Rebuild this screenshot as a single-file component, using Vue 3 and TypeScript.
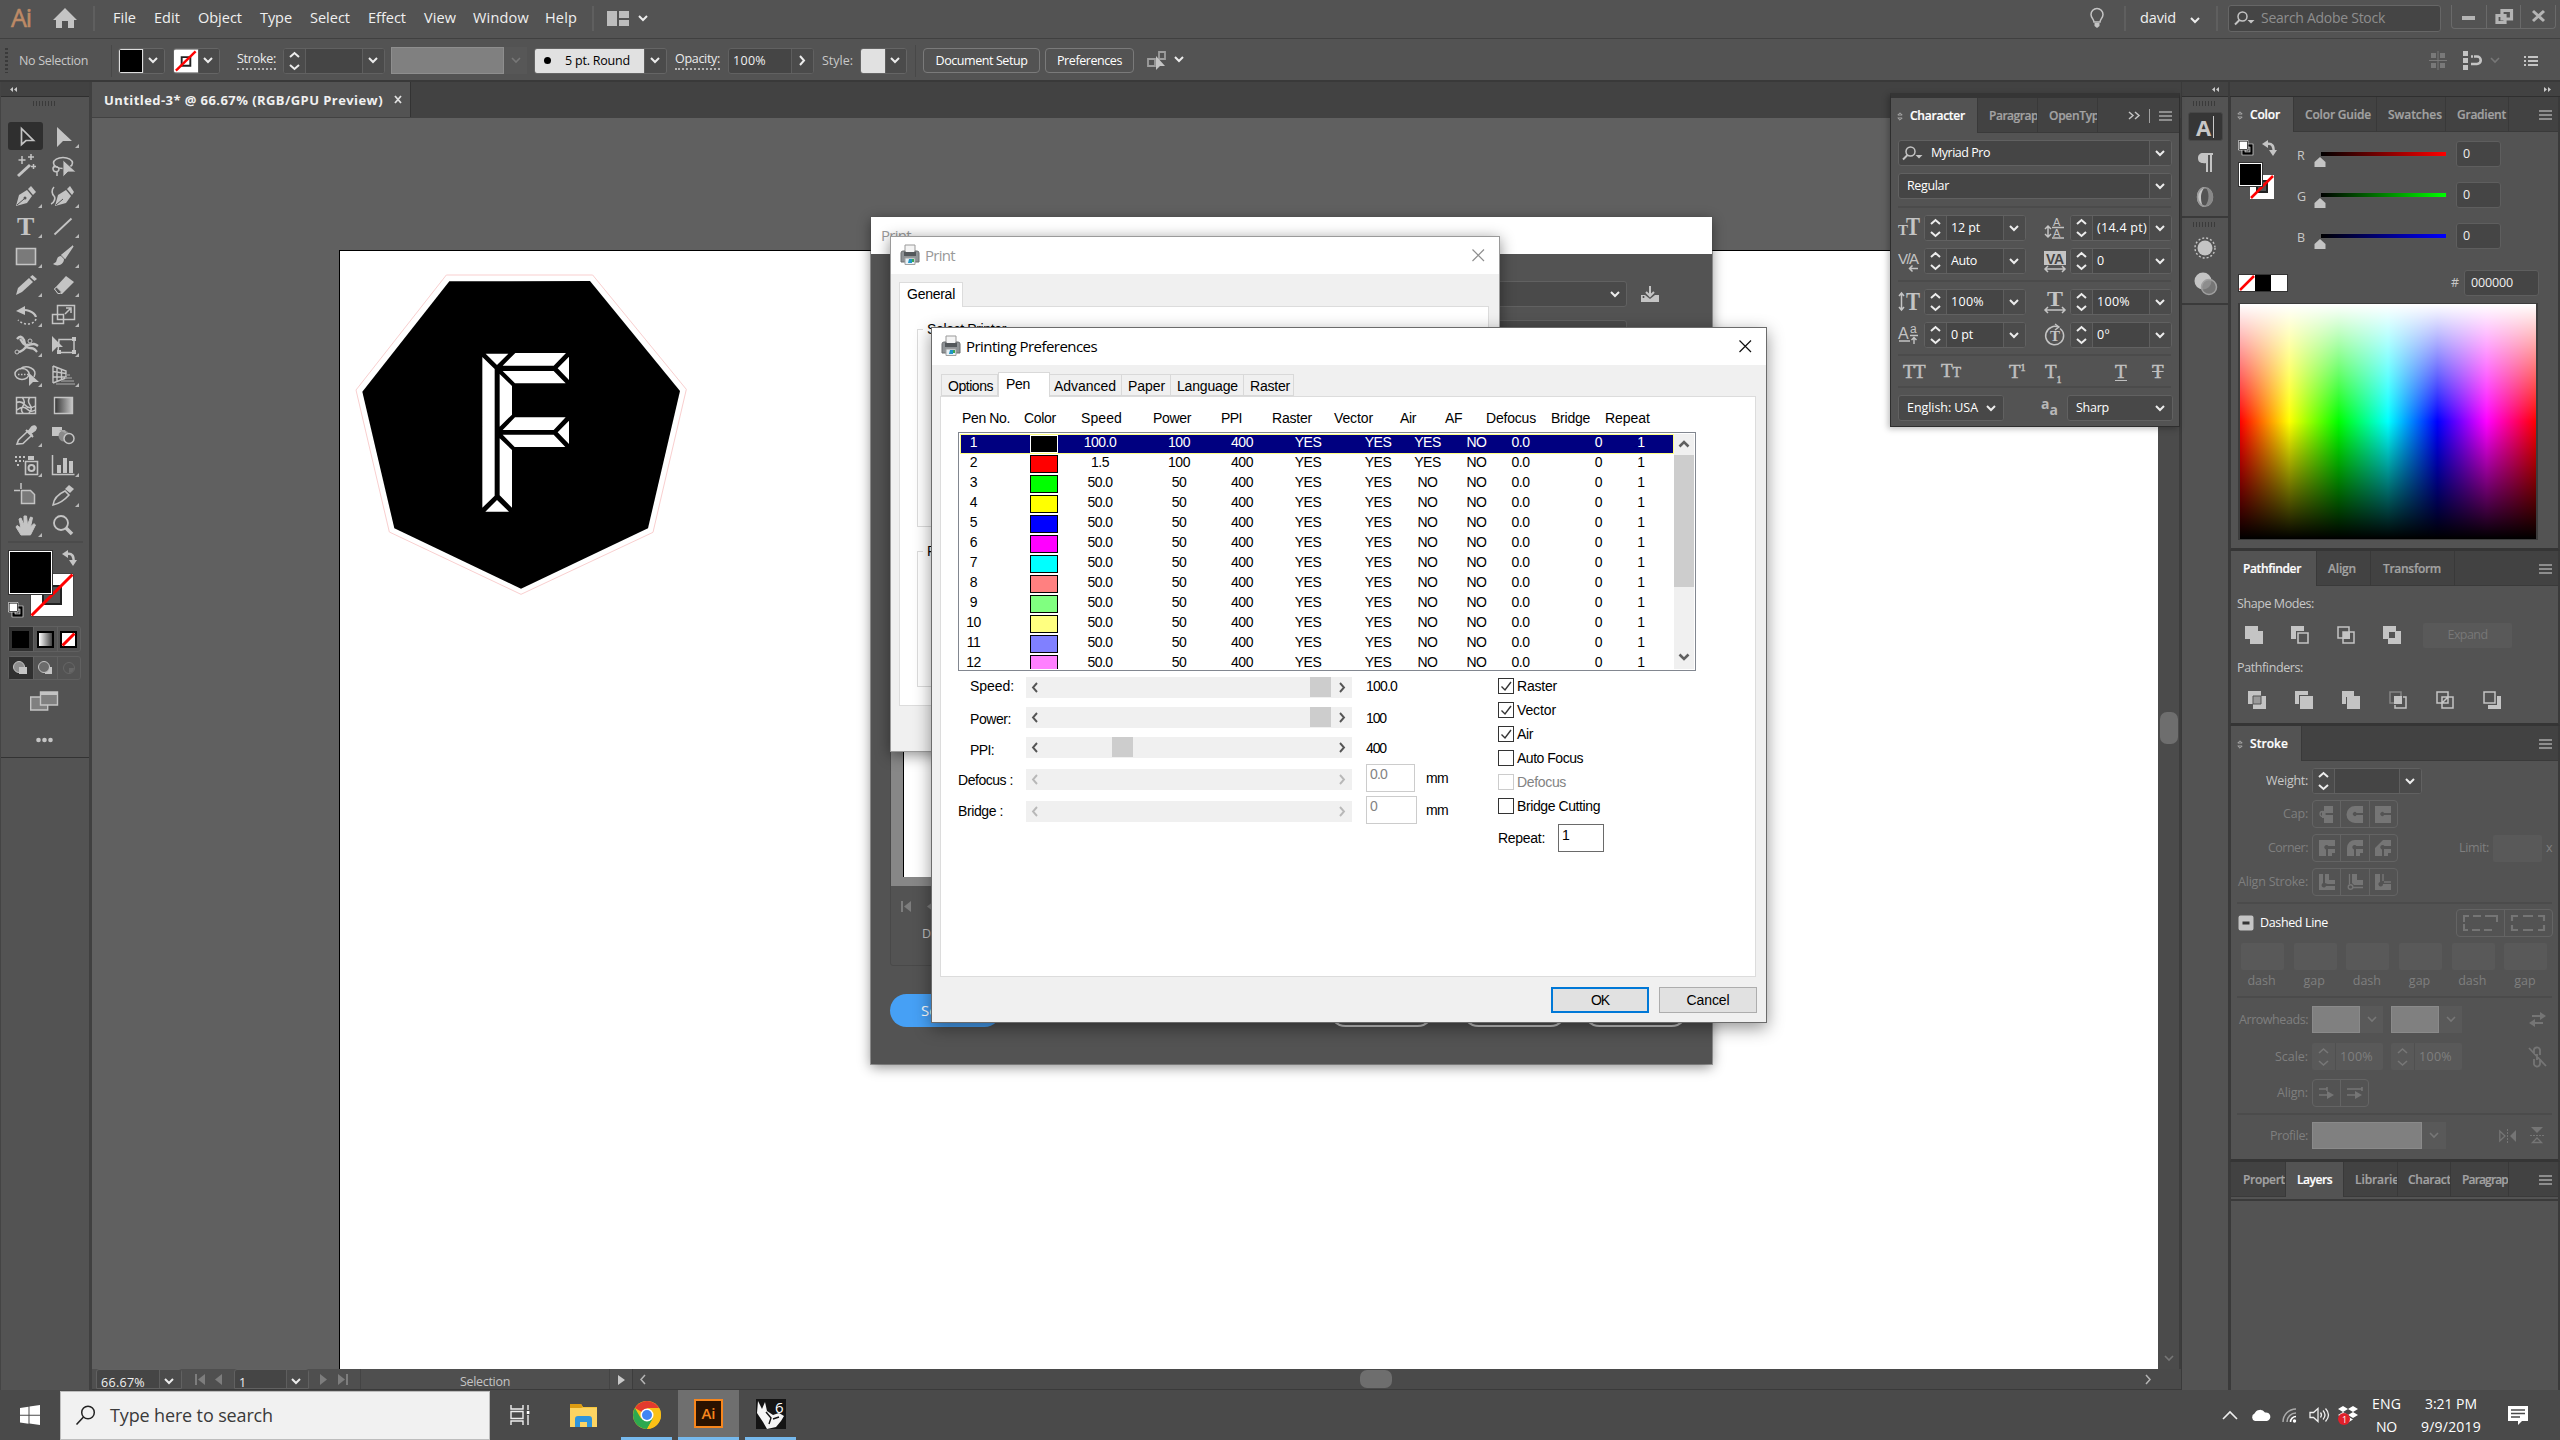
<script setup lang="ts">
import { h } from 'vue'

const G = '#c4c4c4'
const D = '#757575'

/* Tightens or loosens tracking so a label occupies the given width. */
const vFit = {
  mounted(el: HTMLElement, b: { value: number }) {
    const r = document.createRange()
    r.selectNodeContents(el)
    const natural = r.getBoundingClientRect().width
    const n = (el.textContent || ' ').length
    el.style.letterSpacing = ((b.value - natural) / n).toFixed(3) + 'px'
  },
}

const svgs: Record<string, string> = {
  home: `<path d="M12 0L0 12h3v8h6v-7h6v7h6v-8h3z" fill="${G}"/>`,
  layout: `<path d="M0 0h10v15H0zM12 0h10v7H12zM12 9h10v6H12z" fill="#bdbdbd"/>`,
  bulb: `<path d="M4 14C4 11 1 10 1 6.500a6 6 0 0 1 12 0C13 10 10 11 10 14z" fill="none" stroke="${G}" stroke-width="1.500"/><path d="M4.500 15h5v3l-2.500 2-2.500-2z" fill="${G}"/>`,
  mag: `<circle cx="8.500" cy="5.500" r="4.500" fill="none" stroke="${G}" stroke-width="1.500"/><path d="M5.500 9L1 13.500" stroke="${G}" stroke-width="2"/><path d="M13.500 9h7l-3.500 3.500z" fill="${G}"/>`,
  winmin: `<path d="M0 6h13v4H0z" fill="#b4b4b4"/>`,
  winres: `<path d="M7 1.500h9.500V10H7zM2 6.500h8v7H2z" fill="none" stroke="#b4b4b4" stroke-width="3.200"/>`,
  winx: `<path d="M1 1l11 10M12 1L1 11" stroke="#b4b4b4" stroke-width="3"/>`,
  grip4: `<path d="M2 2h5v5H2zM11 2h5v5h-5zM2 12h5v5H2zM11 12h5v5h-5z" fill="#797979"/><path d="M9 0v19M0 9.500h18" stroke="#797979"/>`,
  snap: `<path d="M0 0h5v5H0zM0 7h5v5H0zM0 14h5v5H0z" fill="${G}"/><path d="M8 5.500h6a3.300 3.300 0 0 1 0 7.500H8" fill="none" stroke="${G}" stroke-width="2.600" stroke-dasharray="2 1 30"/>`,
  list: `<path d="M0 0h2v2H0zM0 4h2v2H0zM0 8h2v2H0zM4 0h10v2H4zM4 4h10v2H4zM4 8h10v2H4z" fill="${G}"/>`,
  isolate: `<path d="M1 8h7v7H1zM12 1h6v7h-6z" fill="none" stroke="#9d9d9d" stroke-width="1.800"/><path d="M9 5v14l4-4h5z" fill="${G}"/>`,
  chev: `<path d="M1 1l4 4 4-4" fill="none" stroke="#ececec" stroke-width="2"/>`,
  chevd: `<path d="M1 1l4 4 4-4" fill="none" stroke="#777" stroke-width="1.600"/>`,
  chevr: `<path d="M1 1l4 4.500L1 10" fill="none" stroke="#ececec" stroke-width="2"/>`,
  spin: `<path d="M1 5l4.500-4L10 5M1 13l4.500 4 4.500-4" fill="none" stroke="#ececec" stroke-width="2"/>`,
  spind: `<path d="M1 5l4.500-4L10 5M1 13l4.500 4 4.500-4" fill="none" stroke="#777" stroke-width="1.600"/>`,
  noneSw: `<path d="M0 0h25v24H0z" fill="#fff"/><path d="M8 8h9v9H8z" fill="#fff" stroke="#222" stroke-width="2"/><path d="M2 22L22.500 2" stroke="#f00" stroke-width="2.500"/>`,
  menu: `<path d="M0 1h13M0 5h13M0 9h13" stroke="#a6a6a6" stroke-width="1.300"/>`,
  updn: `<path d="M.8 3L3 .8 5.200 3zM.8 6L3 8.200 5.200 6z" fill="none" stroke="#a8a8a8"/>`,
  dblL: `<path d="M4 0L1 2.500 4 5zM8 0L5 2.500 8 5z" fill="#c9c9c9"/>`,
  dblR: `<path d="M1 0l3 2.500L1 5zM5 0l3 2.500L5 5z" fill="#c9c9c9"/>`,
  more: `<path d="M1 1l4 3.500L1 8M7 1l4 3.500L7 8" fill="none" stroke="${G}" stroke-width="1.500"/>`,
  closex: `<path d="M1 1l6 7M7 1L1 8" stroke="#e0e0e0" stroke-width="1.800"/>`,
  swap: `<path d="M5 4c5-1 7 2 6.500 8" fill="none" stroke="${G}" stroke-width="2.500"/><path d="M6 0v8L0 4zM7 10h8l-4 6z" fill="${G}"/>`,
  deflt: `<path d="M5.500 5.500h8v8h-8z" fill="none" stroke="#fff" stroke-width="3.600"/><path d="M5.500 5.500h8v8h-8z" fill="none" stroke="#000" stroke-width="2.400"/><path d="M1 1h8.500v8.500H1z" fill="#fff" stroke="#000"/><path d="M.5.5h9.500v9.500H.5z" fill="none" stroke="#fff" stroke-width=".6"/>`,
  strokeSw: `<path d="M.5.5h43v43H.5z" fill="#fff" stroke="#444"/><path d="M13 13h18v18H13z" fill="#535353" stroke="#222" stroke-width="2"/><path d="M1.500 42.500l41-41" stroke="#f00" stroke-width="3"/>`,
  mBlack: `<path d="M0 0h17v17H0z" fill="#000"/>`,
  mGrad: `<defs><linearGradient id="mg"><stop stop-color="#fff"/><stop offset="1" stop-color="#444"/></linearGradient></defs><path d="M0 0h17v17H0z" fill="#000"/><path d="M2 2h13v13H2z" fill="url(#mg)"/>`,
  mNone: `<path d="M0 0h17v17H0z" fill="#000"/><path d="M2 2h13v13H2z" fill="#fff"/><path d="M2.500 14.500l12-12" stroke="#f00" stroke-width="3"/>`,
  dNorm: `<ellipse cx="6" cy="6" rx="5.500" ry="5.500" fill="#8d8d8d" stroke="${G}"/><path d="M6 6h8v7H6z" fill="${G}"/>`,
  dBehind: `<path d="M7 6h7v7H7z" fill="${G}"/><circle cx="6" cy="6" r="5.500" fill="#6b6b6b" stroke="${G}"/>`,
  dInside: `<circle cx="7" cy="7" r="5.500" fill="none" stroke="#666"/><path d="M7 7h5a5 5 0 0 1-5 5z" fill="#666"/>`,
  screen: `<path d="M.7 6h17v13H.7z" fill="#808080" stroke="${G}" stroke-width="1.400"/><path d="M10.500 1h17v13h-17z" fill="#808080" stroke="${G}" stroke-width="1.400"/><path d="M10 1h18v3H10z" fill="${G}"/>`,
  dots: `<circle cx="2.500" cy="3" r="2.300" fill="${G}"/><circle cx="8.500" cy="3" r="2.300" fill="${G}"/><circle cx="14.500" cy="3" r="2.300" fill="${G}"/>`,
  fsize: `<text x="0" y="18" font-family="Liberation Serif" font-weight="700" font-size="15" fill="${G}">T</text><text x="8" y="18" font-family="Liberation Serif" font-weight="700" font-size="25" textLength="14" lengthAdjust="spacingAndGlyphs" fill="${G}">T</text>`,
  leading: `<path d="M4 9v10M1 12l3-3 3 3M1 17l3 3 3-3" stroke="${G}" fill="none" stroke-width="1.500"/><text x="9" y="9" font-family="Liberation Sans" font-size="11" textLength="10" fill="${G}">A</text><text x="9" y="20" font-family="Liberation Sans" font-size="11" textLength="10" fill="${G}">A</text><path d="M8 10.500h12M8 21h12" stroke="${G}" stroke-width="1.300"/>`,
  kern: `<text x="0" y="14" font-family="Liberation Sans" font-size="15" textLength="21" fill="${G}">V/A</text><path d="M20 18.500h-8M14.500 15.500l-3 3 3 3" stroke="${G}" fill="none" stroke-width="1.500"/>`,
  track: `<path d="M0 1h22v14H0z" fill="${G}"/><text x="2" y="13.500" font-family="Liberation Sans" font-weight="700" font-size="14" textLength="18" fill="#444">VA</text><path d="M1 19h20M4 16l-3 3 3 3M18 16l3 3-3 3" stroke="${G}" fill="none" stroke-width="1.500"/>`,
  vscale: `<path d="M3.500 2v17M1 5l2.500-3L6 5M1 16l2.500 3L6 16" stroke="${G}" fill="none" stroke-width="1.500"/><text x="8" y="19" font-family="Liberation Serif" font-weight="700" font-size="26" textLength="14" lengthAdjust="spacingAndGlyphs" fill="${G}">T</text>`,
  hscale: `<text x="3" y="15" font-family="Liberation Serif" font-weight="700" font-size="22" textLength="16" lengthAdjust="spacingAndGlyphs" fill="${G}">T</text><path d="M1 19h20M4 16l-3 3 3 3M18 16l3 3-3 3" stroke="${G}" fill="none" stroke-width="1.500"/>`,
  bshift: `<text x="0" y="15" font-family="Liberation Sans" font-size="16" fill="${G}">A</text><text x="12" y="9" font-family="Liberation Sans" font-size="12" fill="${G}">a</text><path d="M1 17h11M12 11.500h8M16 20v-6M13.500 16l2.500-2.500 2.500 2.500" stroke="${G}" fill="none" stroke-width="1.400"/>`,
  rotc: `<path d="M7 3.500a9 9 0 1 0 9 1" fill="none" stroke="${G}" stroke-width="1.500"/><path d="M7 3.500c2-1.200 5-1.500 7-.5" fill="none" stroke="${G}" stroke-width="1.500"/><path d="M11 0l4 3-4 3" fill="none" stroke="${G}" stroke-width="1.400"/><text x="6" y="16.500" font-family="Liberation Serif" font-weight="700" font-size="15" fill="${G}">T</text>`,
  para: `<path d="M8 0h7v2h-1v17h-2V2h-2v17H8v-9a5 5 0 0 1-3 0C1 10 0 7.500 0 5c0-3 2-5 5-5z" fill="${G}"/>`,
  otype: `<path d="M9 0C4 0 1 4.500 1 10s3 10 8 10c-3-1-4-5-4-10S8 1 9 0z" fill="${G}"/><ellipse cx="9" cy="10" rx="7.500" ry="9.300" fill="none" stroke="#999" stroke-width="1.600"/><path d="M10 1c3 3 4 13-1 18 5 0 8-4 8-9s-3-9-7-9z" fill="#888"/>`,
  sun: `<circle cx="11" cy="11" r="7.500" fill="${G}"/><circle cx="11" cy="11" r="10" fill="none" stroke="${G}" stroke-width="1.400" stroke-dasharray="2 2"/>`,
  circles: `<circle cx="9" cy="9" r="8.500" fill="${G}"/><circle cx="15" cy="15" r="7.500" fill="#808080" fill-opacity=".8" stroke="#a0a0a0" stroke-width="1.500"/>`,
  thumb: `<path d="M6 0l5.500 5v5H.5V5z" fill="${G}"/>`,
  cSmallStroke: `<path d="M0 0h24v24H0z" fill="#fff"/><path d="M7 6h10v11H7z" fill="#535353" stroke="#222" stroke-width="2"/><path d="M1 23L23 1" stroke="#f00" stroke-width="2.500"/>`,
  none16: `<path d="M0 0h16v16H0z" fill="#fff"/><path d="M1 15L15 1" stroke="#f00" stroke-width="2.500"/>`,
  pf0: `<path d="M0 0h13v5h5v13H5v-5H0z" fill="${G}"/>`,
  pf1: `<path d="M0 0h13v5H5v8H0z" fill="${G}"/><path d="M7 7h10v10H7z" fill="none" stroke="${G}" stroke-width="1.600"/>`,
  pf2: `<path d="M1 1h11v11H1zM6 6h11v11H6z" fill="none" stroke="${G}" stroke-width="1.500"/><path d="M6 6h7v7H6z" fill="${G}"/>`,
  pf3: `<path fill-rule="evenodd" d="M0 0h13v5h5v13H5v-5H0zM6 6v6h6V6z" fill="${G}"/>`,
  pf4: `<path d="M0 0h13v13H0z" fill="${G}"/><path d="M5 5h13v13H5z" fill="${G}"/><path d="M5 5h8v8H5z" fill="#9a9a9a" stroke="#555"/>`,
  pf5: `<path d="M0 0h13v4H4v9H0z" fill="${G}"/><path d="M5 5h13v13H5z" fill="${G}"/>`,
  pf6: `<path d="M0 0h12v5h6v13H5v-5H0z" fill="${G}"/><path d="M4.500 13V6" stroke="#535353"/>`,
  pf7: `<path d="M1 1h11v11H1z" fill="none" stroke="#858585" stroke-width="1.500"/><path d="M14 6h3v11H6v-3" fill="none" stroke="${G}" stroke-width="1.500"/><path d="M5 5h8v8H5z" fill="${G}"/>`,
  pf8: `<path d="M1 1h11v11H1zM6 6h11v11H6zM6 12l6-6" fill="none" stroke="${G}" stroke-width="1.500"/>`,
  pf9: `<path d="M1 1h11v11H1z" fill="none" stroke="${G}" stroke-width="1.500"/><path d="M14 5h4v13H5v-4h9z" fill="${G}"/>`,
  cap0: `<path d="M5 0h9v7H6v2h8v8H5v-5H3V5h2z" fill="${D}"/><circle cx="3.500" cy="8" r="2.500" fill="none" stroke="${D}" stroke-width="1.300"/>`,
  cap1: `<path d="M8 0h8v7H9.500a2 2 0 1 0 0 2H16v8H8A8 8 0 0 1 8 0z" fill="${D}"/>`,
  cap2: `<path d="M0 0h16v7H9a2 2 0 1 0 0 2h7v8H0z" fill="${D}"/>`,
  cor0: `<path d="M0 0h16v6H9.500a2.300 2.300 0 1 0-2.500 3.500V16H0zM9 9h7v4h-3v3H9z" fill="${D}"/>`,
  cor1: `<path d="M8 0h8v6H9.500A2.300 2.300 0 1 0 7 9.500V16H0V8a8 8 0 0 1 8-8zM9 9h7v4h-3v3H9z" fill="${D}"/>`,
  cor2: `<path d="M8 0h8v6H9.500A2.300 2.300 0 1 0 7 9.500V16H0V8zM9 9h7v4h-3v3H9z" fill="${D}"/>`,
  als0: `<path d="M0 0h4v9a2.300 2.300 0 1 0 3 3h9v4H0zM6 0h4v6h6v4H8.500L6 9z" fill="${D}"/>`,
  als1: `<path d="M2.500 0v10M6 13.500h10" stroke="${D}" stroke-width="1.300"/><circle cx="3.500" cy="13" r="2.300" fill="none" stroke="${D}" stroke-width="1.400"/><path d="M5 0h5v6h6v5H7L5 9z" fill="${D}"/>`,
  als2: `<path d="M0 0h5v8a2.300 2.300 0 1 0 3 2h8v6H0z" fill="${D}"/><path d="M8 0v7M9 8h7" stroke="${D}" stroke-width="1.500"/>`,
  dash0: `<path d="M1 7V1h5M10 1h8M22 1h12v6M1 9v6h4M9 15h8M21 15h8" fill="none" stroke="${D}" stroke-width="2"/><path d="M34 9v0" stroke="${D}"/>`,
  dash1: `<path d="M1 6V1h6M12 1h10M27 1h6v5M33 10v5h-6M22 15H12M7 15H1v-5" fill="none" stroke="${D}" stroke-width="2.200"/>`,
  arsw: `<path d="M3 4h9M5 11h9" stroke="${D}" stroke-width="2.200"/><path d="M11 0l6 4-6 4zM6 7l-6 4 6 4z" fill="${D}"/>`,
  link: `<path d="M6 7V4a3 3 0 0 1 6-1v5M6 12v4a3 3 0 0 0 6 1v-5M9 7v6M1 1l17 18" fill="none" stroke="${D}" stroke-width="1.800"/>`,
  alA: `<path d="M0 2h8M8 0v4M0 8h9" stroke="${D}" stroke-width="1.600"/><path d="M8 4l7 4-7 4z" fill="${D}"/>`,
  alB: `<path d="M0 2h15M15 0v4M0 8h9" stroke="${D}" stroke-width="1.600"/><path d="M8 4l7 4-7 4z" fill="${D}"/>`,
  flipH: `<path d="M.8 2v10L6 7z" fill="none" stroke="${D}" stroke-width="1.300"/><path d="M17 1v12l-6-6z" fill="${D}"/><path d="M8.500 0v14" stroke="${D}" stroke-dasharray="2 1"/>`,
  flipV: `<path d="M1 0h12L7 6z" fill="${D}"/><path d="M2.500 15.500h9L7 11z" fill="none" stroke="${D}" stroke-width="1.300"/><path d="M0 8.500h14" stroke="${D}" stroke-dasharray="2 1"/>`,
  chk: `<path d="M.5 2.500a2 2 0 0 1 2-2h11a2 2 0 0 1 2 2v11a2 2 0 0 1-2 2h-11a2 2 0 0 1-2-2z" fill="${G}"/><path d="M4.500 6.500h7v3h-7z" fill="#333"/>`,
  printer: `<path d="M5 0h10v9H5z" fill="#f4f4f4" stroke="#999"/><path d="M1 8q0-2 2-2h2v3h10V6h2q2 0 2 2v9H1z" fill="#8f9396" stroke="#6d6f71"/><path d="M4 7h12v4H4z" fill="#54585b"/><path d="M5 13h10v6.500H5z" fill="#e8f1f6" stroke="#a0a0a0"/><path d="M9 14h3v4H8z" fill="#2196c8"/><path d="M12 14h2v3h-2z" fill="#3aa655"/>`,
  xblk: `<path d="M.5.5l11.500 11.500M12 .5L.5 12" stroke="#111" stroke-width="1.200"/>`,
  xgry: `<path d="M.5.5l11.500 11.500M12 .5L.5 12" stroke="#8f8f8f" stroke-width="1.200"/>`,
  sUp: `<path d="M1.500 6.500L6 2l4.500 4.500" fill="none" stroke="#606060" stroke-width="2.600"/>`,
  sDn: `<path d="M1.500 1.500L6 6l4.500-4.500" fill="none" stroke="#606060" stroke-width="2.600"/>`,
  sL: `<path d="M6 1L2 5.500 6 10" fill="none" stroke="#555" stroke-width="1.900"/>`,
  sR: `<path d="M2 1l4 4.500L2 10" fill="none" stroke="#555" stroke-width="1.900"/>`,
  sLd: `<path d="M6 1L2 5.500 6 10" fill="none" stroke="#b8b8b8" stroke-width="1.900"/>`,
  sRd: `<path d="M2 1l4 4.500L2 10" fill="none" stroke="#b8b8b8" stroke-width="1.900"/>`,
  tick: `<path d="M2.500 7.500l3.500 3.500 6-8" fill="none" stroke="#333" stroke-width="1.400"/>`,
  dl: `<path d="M0 9h4l5 4 5-4h4v7H0z" fill="${G}"/><path d="M9 0v9M5 6l4 4 4-4" fill="none" stroke="${G}" stroke-width="2"/><circle cx="2.500" cy="11" r="1" fill="#444"/>`,
  first: `<path d="M1 0v11" stroke="#7d7d7d" stroke-width="2"/><path d="M10 0v11L3 5.500z" fill="#7d7d7d"/>`,
  prev: `<path d="M7 0v11L0 5.500z" fill="#7d7d7d"/>`,
  next: `<path d="M0 0v11l7-5.500z" fill="#7d7d7d"/>`,
  last: `<path d="M9 0v11" stroke="#7d7d7d" stroke-width="2"/><path d="M0 0v11l7-5.500z" fill="#7d7d7d"/>`,
  play: `<path d="M0 0v10l7-5z" fill="#c9c9c9"/>`,
  hl: `<path d="M5 1L1 5.500 5 10" fill="none" stroke="#b5b5b5" stroke-width="1.500"/>`,
  hr: `<path d="M1 1l4 4.500L1 10" fill="none" stroke="#b5b5b5" stroke-width="1.500"/>`,
  win: `<path d="M0 3l8.500-1.200v8H0zM9.500 1.600L20 0v9.800H9.500zM0 10.800h8.500v8L0 17.500zM9.500 10.800H20V20l-10.500-1.500z" fill="#fff"/>`,
  wsearch: `<circle cx="13" cy="7.500" r="6.300" fill="none" stroke="#222" stroke-width="1.500"/><path d="M8.500 12L1.500 19.500" stroke="#222" stroke-width="1.600"/>`,
  tview: `<path d="M1 0v4h12V0M1 20v-4h12v4M1 6.500h12v7H1zM18 0v5M18 10v10" fill="none" stroke="#eee" stroke-width="1.400"/><path d="M16.800 6h2.600v3h-2.600z" fill="#fff"/>`,
  folder: `<path d="M0 1h11l2 3h14v20H0z" fill="#f8c63a"/><path d="M0 1h11l2 3-2 1H0z" fill="#dd9c12"/><path d="M0 5h27v19H0z" fill="#fcd462"/><path d="M5 24v-8q0-3 3-3h11q3 0 3 3v8h-5v-5h-7v5z" fill="#2f95dc"/>`,
  chrome: `<circle cx="14" cy="14" r="14" fill="#fbc116"/><path d="M14 14L1.900 7A14 14 0 0 1 26.100 7z" fill="#e33b2e"/><path d="M1.900 7A14 14 0 0 0 14 28l6-10.500-12 0z" fill="#2da94f"/><path d="M14 28A14 14 0 0 0 26.100 7H14l6 10.500z" fill="#fbc116"/><circle cx="14" cy="14" r="6.500" fill="#fff"/><circle cx="14" cy="14" r="5" fill="#4285f4"/>`,
  rhino: `<path d="M0 0h30v30H0z" fill="#141414"/><path d="M2 2l4 8 3-7 2 9 6 4 6-2 5 3-3 5-5 6-9 2-4-7-6-9z" fill="#f4f4f4"/><path d="M10 13l5 6-2 6M17 20l6-2" stroke="#141414" stroke-width="1.400" fill="none"/><text x="19" y="14" font-family="Open Sans" font-size="15" fill="#fff">6</text>`,
  tup: `<path d="M1 8l7-7 7 7" fill="none" stroke="#eee" stroke-width="1.600"/>`,
  cloud: `<path d="M5 12a4 4 0 0 1-.5-7.500A6 6 0 0 1 15 3.500a4.300 4.300 0 0 1 2 8.500z" fill="#fff"/>`,
  wifi: `<path d="M3 15A13 13 0 0 1 16 2M7 15a9 9 0 0 1 9-9" fill="none" stroke="#aaa" stroke-width="1.500"/><path d="M10.500 15a5.500 5.500 0 0 1 5.500-5.500" fill="none" stroke="#fff" stroke-width="1.600"/><circle cx="14.500" cy="14" r="1.700" fill="#fff"/>`,
  sound: `<path d="M1 5.500h3.500L9 1.500v13L4.500 10.500H1z" fill="none" stroke="#eee" stroke-width="1.300"/><path d="M11.500 5.500q2 2.500 0 5M14 3.500q4 4.500 0 9M16.500 1.500q6 6.500 0 13" fill="none" stroke="#eee" stroke-width="1.300"/>`,
  dbox: `<path d="M5 0l5 3-5 3-5-3zM15 0l5 3-5 3-5-3zM5 6l5 3-5 3-5-3zM15 6l5 3-5 3-5-3zM10 10.500l5 3-5 3-5-3z" fill="#fff"/><circle cx="6" cy="13" r="6" fill="#e0202a"/><text x="4" y="16.500" font-family="Open Sans" font-size="9" fill="#fff">1</text>`,
  notif: `<path d="M0 0h20v15h-6l-4 4v-4H0z" fill="#fff"/><path d="M3 4h14M3 7.500h14M3 11h9" stroke="#4a4a4a" stroke-width="1.300"/>`,
}

const toolIcons: string[] = [
  `<path d="M13.500 6.500v16l4.500-4h7.500z" fill="none" stroke="${G}" stroke-width="1.700"/>`,
  `<path d="M12 5v20l6-6h9z" fill="${G}"/>`,
  `<path d="M10 24l12-11" stroke="${G}" stroke-width="3"/><path d="M14 4v8M10.500 8h7M23 2v6M20 5h6M25.500 12v5M23 14.500h5" stroke="${G}" stroke-width="1.500"/>`,
  `<ellipse cx="18" cy="11" rx="9.500" ry="5.500" fill="none" stroke="${G}" stroke-width="1.600"/><path d="M10 14a3 3 0 1 0 4 3c0-2-3-3-5-2M12 20v4" fill="none" stroke="${G}" stroke-width="1.500"/><path d="M18 8v17l5-5h8z" fill="${G}" stroke="#535353" stroke-width=".8"/>`,
  `<path d="M8 24l3-11 8-5 5 6-5 7z" fill="${G}"/><path d="M20 7l3-3 5 6-3 3z" fill="${G}"/><path d="M9 23l7-6" stroke="#535353"/><circle cx="17" cy="16" r="1.500" fill="#535353"/>`,
  `<path d="M10 24l3-11 8-5 5 6-5 7z" fill="${G}"/><path d="M22 7l3-3 4 6-2 3z" fill="${G}"/><path d="M11 23l7-6" stroke="#535353"/><path d="M9 5c-3 3-2 7 0 9s0 7-3 8" fill="none" stroke="${G}" stroke-width="1.600"/>`,
  `<text x="9" y="23" font-family="Liberation Serif" font-weight="700" font-size="26" fill="${G}">T</text>`,
  `<path d="M9.500 22.500L26.500 6.500" stroke="${G}" stroke-width="1.800"/>`,
  `<path d="M8.500 6.500h19v16h-19z" fill="#7a7a7a" stroke="${G}" stroke-width="1.600"/>`,
  `<path d="M28 4L17 13l3 3z" fill="${G}" stroke="${G}" stroke-width="1.500"/><path d="M16 14c-4 0-4 4-5 6l-3 2c4 3 11 1 11-5z" fill="${G}"/>`,
  `<path d="M8 24l2-7L21 7l4 4-11 10z" fill="${G}"/><path d="M22 6l2.500-2L29 8l-2.500 2z" fill="${G}"/>`,
  `<path d="M9 18L21 5l8 6-12 12h-4z" fill="${G}"/><path d="M10 17.500l5.500 4.500" stroke="#535353"/><path d="M9.500 18l2-2 5 5-1.500 1.500h-2z" fill="#535353" stroke="${G}"/>`,
  `<path d="M11 10a12 9 0 0 1 17 6" fill="none" stroke="${G}" stroke-width="2.200"/><path d="M8 10l9-5v9z" fill="${G}"/><path d="M28 18c-2 6-12 7-18 1" fill="none" stroke="${G}" stroke-width="1.600" stroke-dasharray="2 2"/>`,
  `<path d="M12.500 4.500h17v14h-17zM7.500 13.500h11v9h-11z" fill="none" stroke="${G}" stroke-width="1.500"/><path d="M20 13l5-5M21 7h5v5" fill="none" stroke="${G}" stroke-width="1.500"/>`,
  `<path d="M8 21c5 1 10-4 12-8M12 8c3 3 3 7 8 6s6-2 10 1M9 8q4-5 7 1c1 4 1 8 6 8s5 2 7 4" fill="none" stroke="${G}" stroke-width="2.400"/><circle cx="9" cy="21" r="2" fill="#535353" stroke="${G}"/><circle cx="22" cy="10" r="2" fill="#535353" stroke="${G}"/>`,
  `<path d="M7 5v16l5-5h6z" fill="${G}"/><path d="M14 8.500h15v13H13z" fill="none" stroke="${G}" stroke-width="1.500" /><path d="M27 6h4v4h-4zM27 19h4v4h-4zM12 19h4v4h-4z" fill="${G}"/>`,
  `<ellipse cx="14" cy="13" rx="7" ry="5.500" fill="none" stroke="${G}" stroke-width="1.500"/><path d="M12 8q5-4 11-1t3 9" fill="none" stroke="${G}" stroke-width="1.500"/><path d="M10 13.500h10" stroke="${G}" stroke-dasharray="1.500 1.500" stroke-width="1.500"/><path d="M21 12v13l4-4h6z" fill="${G}"/>`,
  `<path d="M8 5v17M8 5l13 5v7L8 22M12 6.500v14M16.500 8.500v10M8 10.500l13 2M8 16h13" fill="none" stroke="${G}" stroke-width="1.400"/><path d="M21 14h4M20 17h7M16 20h13M11 23h19" stroke="#8f8f8f" stroke-width="1.600"/>`,
  `<path d="M8.500 6.500h19v16h-19zM8 12q5-3 9 2t10 1M9 19q6-5 10-1t8 1M14 6q4 5 1 9t0 7M22 6q-3 4 0 8t-1 8" fill="none" stroke="${G}" stroke-width="1.500"/>`,
  `<defs><linearGradient id="tg"><stop stop-color="#333"/><stop offset="1" stop-color="#c8c8c8"/></linearGradient></defs><path d="M9.500 6.500h18v16h-18z" fill="url(#tg)" stroke="${G}" stroke-width="1.400"/>`,
  `<path d="M9 23l1.500-4L20 10l4 4-9 8.500z" fill="none" stroke="${G}" stroke-width="1.600"/><path d="M18 9l7 7M21 10l3-4q3-2 4 1l-1 2-4 3z" fill="${G}" stroke="${G}" stroke-width="2"/>`,
  `<path d="M7 6h10v9H7z" fill="${G}"/><circle cx="19" cy="15" r="5.500" fill="#8a8a8a"/><circle cx="24" cy="17.500" r="5" fill="#535353" stroke="${G}" stroke-width="1.500"/><path d="M14 9h6l2 4" fill="#a5a5a5"/>`,
  `<path d="M17.500 10.500h12v13h-12z" fill="none" stroke="${G}" stroke-width="1.600"/><circle cx="23.500" cy="17" r="3" fill="none" stroke="${G}" stroke-width="2"/><path d="M20 5h6v4h-6z" fill="${G}"/><path d="M7 6h2M11 6h2M15 6h2M7 10h2M11 10h2M15 10h1M9 14h2" stroke="${G}" stroke-width="2"/>`,
  `<path d="M7.500 4v19.500h22" fill="none" stroke="${G}" stroke-width="1.500"/><path d="M12 14h4v8h-4zM18 7h4v15h-4zM24 10h4v12h-4z" fill="${G}"/>`,
  `<path d="M13.500 9.500h9l4 4v9h-13z" fill="#7a7a7a" stroke="${G}" stroke-width="1.500"/><path d="M6 9.500h6M13 2v6" stroke="${G}" stroke-width="1.500"/>`,
  `<path d="M8 24q1-9 12-14l4 4q-7 8-16 10z" fill="none" stroke="${G}" stroke-width="1.600"/><path d="M20 8l4-4 5 4-4 4z" fill="${G}"/>`,
  `<path d="M13 24l-5-8 1-1.500 4 2.500-2-9 2-1 3 7 0-9h2.500l1 9 3-8 2 .7-2 9 3.500-3 1.500 1.200-5 10z" fill="${G}" stroke="${G}"/>`,
  `<circle cx="16" cy="12" r="7" fill="none" stroke="${G}" stroke-width="1.800"/><path d="M21 17l6 6" stroke="${G}" stroke-width="3.500"/>`,
]
toolIcons.forEach((s, i) => { svgs['tool' + i] = s })
const noFly = new Set([0, 2, 3, 18, 19, 21, 24, 27])

const Ic = (p: { n: string; w: number; h: number }) =>
  h('svg', { class: 'ic', width: p.w, height: p.h, viewBox: `0 0 ${p.w} ${p.h}`, innerHTML: svgs[p.n] })
Ic.props = ['n', 'w', 'h']

const menus = [
  { t: 'File', x: 41, w: 23 }, { t: 'Edit', x: 44, w: 26 }, { t: 'Object', x: 62, w: 44 },
  { t: 'Type', x: 50, w: 32 }, { t: 'Select', x: 58, w: 40 }, { t: 'Effect', x: 56, w: 38 },
  { t: 'View', x: 49, w: 32 }, { t: 'Window', x: 72, w: 56 }, { t: 'Help', x: 47, w: 32 },
]
const rgb = [
  { k: 'R', c: '#f00' }, { k: 'G', c: '#0f0' }, { k: 'B', c: '#00f' },
]
const penColors = ['#000000', '#ff0000', '#00ff00', '#ffff00', '#0000ff', '#ff00ff', '#00ffff', '#ff8080', '#80ff80', '#ffff80', '#8080ff', '#ff80ff']
const pens = penColors.map((c, i) => ({
  no: i + 1, c, speed: i === 0 ? '100.0' : i === 1 ? '1.5' : '50.0', power: i < 2 ? '100' : '50', air: i < 2 ? 'YES' : 'NO',
}))
const heads = [
  { t: 'Pen No.', x: 62, w: 48 }, { t: 'Color', x: 57, w: 32 }, { t: 'Speed', x: 72, w: 41 }, { t: 'Power', x: 68, w: 38 },
  { t: 'PPI', x: 51, w: 21 }, { t: 'Raster', x: 62, w: 40 }, { t: 'Vector', x: 66, w: 39 }, { t: 'Air', x: 45, w: 16 },
  { t: 'AF', x: 41, w: 17 }, { t: 'Defocus', x: 65, w: 50 }, { t: 'Bridge', x: 54, w: 39 }, { t: 'Repeat', x: 50, w: 45 },
]
const sliders = [
  { l: 'Speed:', w: 44, thumb: 284, v: '100.0', vw: 31, ind: 1 },
  { l: 'Power:', w: 41, thumb: 284, v: '100', vw: 20, ind: 1 },
  { l: 'PPI:', w: 24, thumb: 86, v: '400', vw: 20, ind: 1 },
  { l: 'Defocus :', w: 55, thumb: -1, v: '0.0', vw: 17, ind: 0 },
  { l: 'Bridge :', w: 45, thumb: -1, v: '0', vw: 6, ind: 0 },
]
const checks = [
  { t: 'Raster', w: 40, on: 1, dis: 0 }, { t: 'Vector', w: 39, on: 1, dis: 0 }, { t: 'Air', w: 16, on: 1, dis: 0 },
  { t: 'Auto Focus', w: 66, on: 0, dis: 0 }, { t: 'Defocus', w: 49, on: 0, dis: 1 }, { t: 'Bridge Cutting', w: 83, on: 0, dis: 0 },
]
const dashes = ['dash', 'gap', 'dash', 'gap', 'dash', 'gap']
</script>

<template>
  <div class="app">
    <header class="title">
      <b class="ai">Ai</b>
      <Ic n="home" :w="24" :h="20" class="home" />
      <i class="vd"></i>
      <nav class="menus">
        <span v-for="m in menus" :key="m.t" :style="{ width: m.x + 'px' }"><span v-fit="m.w">{{ m.t }}</span></span>
      </nav>
      <i class="vd"></i>
      <Ic n="layout" :w="22" :h="15" class="lay" />
      <Ic n="chev" :w="10" :h="7" />
      <div class="tright">
        <Ic n="bulb" :w="14" :h="20" />
        <i class="vd"></i>
        <span v-fit="36" class="david">david</span>
        <Ic n="chev" :w="10" :h="7" class="dchev" />
        <i class="vd"></i>
        <div class="stock"><Ic n="mag" :w="21" :h="15" /><span v-fit="124">Search Adobe Stock</span></div>
        <div class="wbtns">
          <span><Ic n="winmin" :w="13" :h="12" /></span>
          <span><Ic n="winres" :w="18" :h="15" /></span>
          <span><Ic n="winx" :w="13" :h="12" /></span>
        </div>
      </div>
    </header>

    <section class="ctl">
      <i class="grip"></i>
      <span v-fit="69" class="lt">No Selection</span>
      <i class="vdiv"></i>
      <div class="sw"><i class="blk"></i><span class="dd"><Ic n="chev" :w="10" :h="7" /></span></div>
      <div class="sw"><Ic n="noneSw" :w="25" :h="24" /><span class="dd"><Ic n="chev" :w="10" :h="7" /></span></div>
      <span v-fit="39" class="lab dot">Stroke:</span>
      <div class="cb c102"><span class="sp"><Ic n="spin" :w="11" :h="18" /></span><span class="fl"></span><span class="dd"><Ic n="chev" :w="10" :h="7" /></span></div>
      <div class="gr"><i></i><span><Ic n="chevd" :w="10" :h="7" /></span></div>
      <div class="brush"><span class="bl"><i></i><span v-fit="65">5 pt. Round</span></span><span class="dd"><Ic n="chev" :w="10" :h="7" /></span></div>
      <span v-fit="45" class="lab dot">Opacity:</span>
      <div class="cb c86"><span class="fl"><span v-fit="33">100%</span></span><span class="dd"><Ic n="chevr" :w="6" :h="11" /></span></div>
      <span v-fit="31" class="lt">Style:</span>
      <div class="sw"><i class="wht"></i><span class="dd"><Ic n="chev" :w="10" :h="7" /></span></div>
      <i class="vdiv"></i>
      <div class="btn b1"><span v-fit="92">Document Setup</span></div>
      <div class="btn b2"><span v-fit="65">Preferences</span></div>
      <Ic n="isolate" :w="20" :h="20" />
      <Ic n="chev" :w="10" :h="7" class="upone" />
      <Ic n="grip4" :w="18" :h="19" />
      <Ic n="snap" :w="19" :h="19" />
      <Ic n="chevd" :w="10" :h="7" />
      <Ic n="list" :w="14" :h="10" />
    </section>

    <main class="main">
      <aside class="tools">
        <div class="phead"><Ic n="dblL" :w="9" :h="5" /></div>
        <i class="hgrip"></i>
        <div class="tgrid">
          <span v-for="n in 28" :key="n" class="tool" :class="{ sel: n === 1 }">
            <Ic :n="'tool' + (n - 1)" :w="37" :h="30" />
            <i v-if="!noFly.has(n - 1)" class="fly"></i>
          </span>
        </div>
        <div class="fs">
          <i class="fill"></i>
          <Ic n="strokeSw" :w="44" :h="44" class="stk" />
          <Ic n="swap" :w="15" :h="16" class="swp" />
          <Ic n="deflt" :w="15" :h="15" class="def" />
        </div>
        <div class="tri t26">
          <span class="on"><Ic n="mBlack" :w="17" :h="17" /></span><span><Ic n="mGrad" :w="17" :h="17" /></span><span><Ic n="mNone" :w="17" :h="17" /></span>
        </div>
        <div class="tri t23">
          <span class="on"><Ic n="dNorm" :w="14" :h="14" /></span><span><Ic n="dBehind" :w="14" :h="14" /></span><span><Ic n="dInside" :w="14" :h="14" /></span>
        </div>
        <Ic n="screen" :w="29" :h="20" class="scr" />
        <Ic n="dots" :w="17" :h="6" class="tdots" />
        <i class="tend"></i>
      </aside>

      <section class="center">
        <div class="tabbar"><div class="dtab"><b v-fit="279">Untitled-3* @ 66.67% (RGB/GPU Preview)</b><Ic n="closex" :w="8" :h="9" /></div></div>
        <div class="work">
          <div class="canvas">
            <div class="artboard"></div>
            <svg class="logo" width="370" height="370" viewBox="0 0 1110 1110">
              <path d="M319 105H758L1039 448 939 877 543 1063 148 876 48 450z" fill="#fff" stroke="#f9cfcf" stroke-width="3" />
              <path d="M328 124L750 123 1020 453 924 865 543 1046 163 865 67 455z" fill="#000" />
              <path d="M427 351l37 36v380l-37 36zM437 341h68l-34 34zM526 339h152l-37 38H488zM687 350v70l-34-35zM488 393h153l36 37H525zM479 402l37 36v86l-37 36zM525 532h152l-36 38H488zM488 584h153l35 37H524zM687 542v70l-34-35zM479 595l37 35v173l-37-37zM436 815h71l-36-35z" fill="#fff" />
            </svg>
          </div>
          <div class="vsc"><i></i><Ic n="chevd" :w="10" :h="7" /></div>
        </div>
        <div class="status">
          <div class="sbox z"><span v-fit="44">66.67%</span><em><Ic n="chev" :w="10" :h="7" /></em></div>
          <Ic n="first" :w="10" :h="11" /><Ic n="prev" :w="10" :h="11" />
          <div class="sbox p"><span>1</span><em><Ic n="chev" :w="10" :h="7" /></em></div>
          <Ic n="next" :w="10" :h="11" /><Ic n="last" :w="10" :h="11" />
          <div class="selbox"><span v-fit="50">Selection</span></div>
          <div class="playb"><Ic n="play" :w="7" :h="10" /></div>
          <div class="hsc"><Ic n="hl" :w="6" :h="11" /><i></i><Ic n="hr" :w="6" :h="11" class="hr" /></div>
        </div>
      </section>

      <aside class="strip">
        <div class="phead r"><Ic n="dblL" :w="9" :h="5" /></div>
        <div class="sg g1">
          <i class="hgrip"></i>
          <span class="abtn"><b>A</b><i></i></span>
          <Ic n="para" :w="15" :h="19" class="s2" />
          <Ic n="otype" :w="18" :h="20" class="s3" />
        </div>
        <div class="sg g2">
          <i class="hgrip"></i>
          <Ic n="sun" :w="22" :h="22" class="s4" />
          <Ic n="circles" :w="23" :h="23" class="s5" />
        </div>
      </aside>

      <aside class="panels">
        <div class="phead r"><Ic n="dblR" :w="9" :h="5" /></div>
        <section class="pn color">
          <div class="tabs">
            <span class="tab on t1"><Ic n="updn" :w="6" :h="9" /><b v-fit="30">Color</b></span>
            <span class="tab t2"><b v-fit="66">Color Guide</b></span>
            <span class="tab t3"><b v-fit="54">Swatches</b></span>
            <span class="tab t4"><b v-fit="49">Gradient</b></span>
            <Ic n="menu" :w="13" :h="10" class="pm" />
          </div>
          <div class="cbody">
            <div class="cleft">
              <div class="cl1"><Ic n="deflt" :w="15" :h="15" /><Ic n="swap" :w="15" :h="16" /></div>
              <div class="cfs"><i></i><Ic n="cSmallStroke" :w="24" :h="24" /></div>
            </div>
            <div class="sls">
              <div v-for="c in rgb" :key="c.k" class="slr">
                <span class="lt">{{ c.k }}</span>
                <div class="trk"><i :style="{ background: `linear-gradient(90deg,#000,${c.c})` }"></i><Ic n="thumb" :w="12" :h="10" /></div>
                <span class="fbox">0</span>
              </div>
            </div>
          </div>
          <div class="hexrow">
            <span class="trisw"><Ic n="none16" :w="16" :h="16" /><i class="k"></i><i class="w"></i></span>
            <span class="lt">#</span>
            <span class="fbox hx"><span v-fit="42">000000</span></span>
          </div>
          <div class="spec"></div>
        </section>

        <section class="pn path">
          <div class="tabs">
            <span class="tab on p1"><b v-fit="58">Pathfinder</b></span>
            <span class="tab p2"><b v-fit="28">Align</b></span>
            <span class="tab p3"><b v-fit="58">Transform</b></span>
            <Ic n="menu" :w="13" :h="10" class="pm" />
          </div>
          <p class="lt"><span v-fit="77">Shape Modes:</span></p>
          <div class="pf a"><Ic v-for="n in 4" :key="n" :n="'pf' + (n - 1)" :w="18" :h="18" /><span class="exp"><span v-fit="40">Expand</span></span></div>
          <p class="lt"><span v-fit="66">Pathfinders:</span></p>
          <div class="pf b"><Ic v-for="n in 6" :key="n" :n="'pf' + (n + 3)" :w="18" :h="18" /></div>
        </section>

        <section class="pn stroke">
          <div class="tabs">
            <span class="tab on s1"><Ic n="updn" :w="6" :h="9" /><b v-fit="38">Stroke</b></span>
            <Ic n="menu" :w="13" :h="10" class="pm" />
          </div>
          <div class="srow r1"><label class="lt"><span v-fit="42">Weight:</span></label>
            <div class="cb c110"><span class="sp"><Ic n="spin" :w="11" :h="18" /></span><span class="fl"></span><span class="dd"><Ic n="chev" :w="10" :h="7" /></span></div></div>
          <div class="srow r2"><label><span v-fit="25">Cap:</span></label><div class="tb"><span v-for="n in 3" :key="n"><Ic :n="'cap' + (n - 1)" :w="16" :h="17" /></span></div></div>
          <div class="srow r2"><label><span v-fit="40">Corner:</span></label><div class="tb"><span v-for="n in 3" :key="n"><Ic :n="'cor' + (n - 1)" :w="16" :h="16" /></span></div>
            <span class="lim"><span v-fit="30">Limit:</span></span><i class="df l"></i><span class="xx">x</span></div>
          <div class="srow r2"><label><span v-fit="70">Align Stroke:</span></label><div class="tb"><span v-for="n in 3" :key="n"><Ic :n="'als' + (n - 1)" :w="16" :h="16" /></span></div></div>
          <hr />
          <div class="dl"><Ic n="chk" :w="16" :h="16" /><span v-fit="68" class="wh">Dashed Line</span><div class="tb2"><span><Ic n="dash0" :w="36" :h="16" /></span><span><Ic n="dash1" :w="36" :h="16" /></span></div></div>
          <div class="dashes"><span v-for="(d, i) in dashes" :key="i"><i class="df"></i><em>{{ d }}</em></span></div>
          <hr class="h2" />
          <div class="srow r3"><label><span v-fit="69">Arrowheads:</span></label><div class="ah"><i></i><span><Ic n="chevd" :w="10" :h="7" /></span></div><div class="ah"><i></i><span><Ic n="chevd" :w="10" :h="7" /></span></div><Ic n="arsw" :w="17" :h="15" class="ri" /></div>
          <div class="srow r4"><label><span v-fit="33">Scale:</span></label><div class="sc"><span><Ic n="spind" :w="11" :h="18" /></span><em><span v-fit="33">100%</span></em></div><div class="sc"><span><Ic n="spind" :w="11" :h="18" /></span><em><span v-fit="33">100%</span></em></div><Ic n="link" :w="18" :h="20" class="ri" /></div>
          <div class="srow r5"><label><span v-fit="31">Align:</span></label><div class="tb pair"><span><Ic n="alA" :w="16" :h="12" /></span><span><Ic n="alB" :w="16" :h="12" /></span></div></div>
          <hr class="h3" />
          <div class="srow r6"><label><span v-fit="38">Profile:</span></label><div class="ah wide"><i></i><span><Ic n="chevd" :w="10" :h="7" /></span></div><Ic n="flipH" :w="17" :h="14" class="fh" /><Ic n="flipV" :w="14" :h="17" class="fv" /></div>
        </section>

        <section class="pn layers">
          <div class="tabs">
            <span class="tab y1"><b v-fit="42">Propert</b></span>
            <span class="tab on y2"><b v-fit="35">Layers</b></span>
            <span class="tab y3"><b v-fit="44">Librarie</b></span>
            <span class="tab y4"><b v-fit="43">Charact</b></span>
            <span class="tab y5"><b v-fit="46">Paragrap</b></span>
            <Ic n="menu" :w="13" :h="10" class="pm" />
          </div>
          <i class="lline"></i>
        </section>
      </aside>
    </main>

    <footer class="task">
      <Ic n="win" :w="20" :h="20" class="start" />
      <div class="search"><Ic n="wsearch" :w="21" :h="21" /><span v-fit="163">Type here to search</span></div>
      <Ic n="tview" :w="20" :h="20" class="tv" />
      <Ic n="folder" :w="27" :h="25" class="fo" />
      <span class="app1 u"><Ic n="chrome" :w="28" :h="28" /></span>
      <span class="app2 u"><b>Ai</b></span>
      <span class="app3 u"><Ic n="rhino" :w="30" :h="30" /></span>
      <div class="tray">
        <Ic n="tup" :w="16" :h="9" /><Ic n="cloud" :w="21" :h="13" /><Ic n="wifi" :w="18" :h="17" /><Ic n="sound" :w="21" :h="16" /><Ic n="dbox" :w="20" :h="19" />
        <span class="two"><span v-fit="29">ENG</span><span v-fit="21">NO</span></span>
        <span class="two clk"><span v-fit="52">3:21 PM</span><span v-fit="60">9/9/2019</span></span>
        <Ic n="notif" :w="20" :h="19" />
      </div>
    </footer>

    <!-- Floating Character panel -->
    <section class="chr">
      <div class="tabs">
        <span class="tab on c1"><Ic n="updn" :w="6" :h="9" /><b v-fit="55">Character</b></span>
        <span class="tab c2"><b v-fit="49">Paragrap</b></span>
        <span class="tab c3"><b v-fit="50">OpenTyp</b></span>
        <Ic n="more" :w="12" :h="9" class="mo" /><i class="bar"></i><Ic n="menu" :w="13" :h="10" class="pm" />
      </div>
      <div class="cb full f1"><span class="fl"><Ic n="mag" :w="21" :h="15" /><span v-fit="59">Myriad Pro</span></span><span class="dd"><Ic n="chev" :w="10" :h="7" /></span></div>
      <div class="cb full f2"><span class="fl"><span v-fit="42">Regular</span></span><span class="dd"><Ic n="chev" :w="10" :h="7" /></span></div>
      <hr class="k1" />
      <div class="cgrid">
        <Ic n="fsize" :w="22" :h="22" /><div class="cb c102"><span class="sp"><Ic n="spin" :w="11" :h="18" /></span><span class="fl"><span v-fit="29">12 pt</span></span><span class="dd"><Ic n="chev" :w="10" :h="7" /></span></div>
        <Ic n="leading" :w="22" :h="22" /><div class="cb c102"><span class="sp"><Ic n="spin" :w="11" :h="18" /></span><span class="fl"><span v-fit="50">(14.4 pt)</span></span><span class="dd"><Ic n="chev" :w="10" :h="7" /></span></div>
        <Ic n="kern" :w="22" :h="22" /><div class="cb c102"><span class="sp"><Ic n="spin" :w="11" :h="18" /></span><span class="fl"><span v-fit="26">Auto</span></span><span class="dd"><Ic n="chev" :w="10" :h="7" /></span></div>
        <Ic n="track" :w="22" :h="22" /><div class="cb c102"><span class="sp"><Ic n="spin" :w="11" :h="18" /></span><span class="fl">0</span><span class="dd"><Ic n="chev" :w="10" :h="7" /></span></div>
      </div>
      <hr class="k2" />
      <div class="cgrid">
        <Ic n="vscale" :w="22" :h="22" /><div class="cb c102"><span class="sp"><Ic n="spin" :w="11" :h="18" /></span><span class="fl"><span v-fit="33">100%</span></span><span class="dd"><Ic n="chev" :w="10" :h="7" /></span></div>
        <Ic n="hscale" :w="22" :h="22" /><div class="cb c102"><span class="sp"><Ic n="spin" :w="11" :h="18" /></span><span class="fl"><span v-fit="33">100%</span></span><span class="dd"><Ic n="chev" :w="10" :h="7" /></span></div>
        <Ic n="bshift" :w="22" :h="22" /><div class="cb c102"><span class="sp"><Ic n="spin" :w="11" :h="18" /></span><span class="fl"><span v-fit="22">0 pt</span></span><span class="dd"><Ic n="chev" :w="10" :h="7" /></span></div>
        <Ic n="rotc" :w="22" :h="22" /><div class="cb c102"><span class="sp"><Ic n="spin" :w="11" :h="18" /></span><span class="fl"><span v-fit="13">0º</span></span><span class="dd"><Ic n="chev" :w="10" :h="7" /></span></div>
      </div>
      <hr class="k3" />
      <div class="ts"><span v-fit="22">TT</span><span>T<small>T</small></span><span>T<sup>1</sup></span><span>T<sub>1</sub></span><span class="un">T</span><span class="st">T</span></div>
      <hr class="k4" />
      <div class="lang">
        <div class="cb nd"><span class="fl"><span v-fit="71">English: USA</span></span><span class="dd"><Ic n="chev" :w="10" :h="7" /></span></div>
        <span class="aa"><i>a</i><i>a</i></span>
        <div class="cb nd"><span class="fl"><span v-fit="33">Sharp</span></span><span class="dd"><Ic n="chev" :w="10" :h="7" /></span></div>
      </div>
    </section>

    <!-- Illustrator print dialog -->
    <section class="d1">
      <div class="dt"><span v-fit="30">Print</span></div>
      <div class="d1b">
        <div class="presets"><i><Ic n="chev" :w="10" :h="7" /></i><Ic n="dl" :w="18" :h="16" /></div>
        <i class="pr2"></i>
        <div class="pvbox">
          <div class="pv"><i></i></div>
          <div class="pnav"><Ic n="first" :w="10" :h="11" /><Ic n="prev" :w="10" :h="11" /></div>
          <div class="doc">Do</div>
        </div>
        <div class="d1f"><span class="blue">Se</span><i></i><i></i><i></i></div>
      </div>
    </section>

    <!-- System print dialog -->
    <section class="d2">
      <div class="wt"><Ic n="printer" :w="20" :h="20" /><span v-fit="30">Print</span><Ic n="xgry" :w="13" :h="13" class="x" /></div>
      <div class="gtab"><span v-fit="48">General</span></div>
      <div class="gpage">
        <fieldset class="fa"><legend><span v-fit="79">Select Printer</span></legend></fieldset>
        <fieldset class="fb"><legend>P</legend></fieldset>
      </div>
    </section>

    <!-- Printing preferences -->
    <section class="d3">
      <div class="wt"><Ic n="printer" :w="20" :h="20" /><span v-fit="131" class="bk">Printing Preferences</span><Ic n="xblk" :w="13" :h="13" class="x" /></div>
      <div class="ptabs">
        <span class="q1"><span v-fit="45">Options</span></span><span class="q2 on"><span v-fit="24">Pen</span></span><span class="q3"><span v-fit="62">Advanced</span></span><span class="q4"><span v-fit="37">Paper</span></span><span class="q5"><span v-fit="61">Language</span></span><span class="q6"><span v-fit="40">Raster</span></span>
      </div>
      <div class="ppage">
        <div class="hd"><span v-for="t in heads" :key="t.t" :style="{ width: t.x + 'px' }"><span v-fit="t.w">{{ t.t }}</span></span></div>
        <div class="lst">
          <div class="rows">
            <div v-for="p in pens" :key="p.no" class="row" :class="{ sel: p.no === 1 }">
              <span>{{ p.no }}</span><span><i :style="{ background: p.c }"></i></span><span>{{ p.speed }}</span><span>{{ p.power }}</span><span>400</span><span>YES</span><span>YES</span><span>{{ p.air }}</span><span>NO</span><span>0.0</span><span>0</span><span>1</span>
            </div>
          </div>
          <div class="lsb"><Ic n="sUp" :w="12" :h="9" /><i></i><Ic n="sDn" :w="12" :h="9" class="dn" /></div>
        </div>
        <div class="form">
          <div class="left">
            <div v-for="(s, i) in sliders" :key="s.l" class="sl" :class="['n' + i, { dis: s.thumb < 0 }]">
              <label :class="{ ind: s.ind }"><span v-fit="s.w">{{ s.l }}</span></label>
              <div class="track"><Ic :n="s.thumb < 0 ? 'sLd' : 'sL'" :w="8" :h="11" /><i v-if="s.thumb >= 0" :style="{ left: s.thumb + 'px' }"></i><Ic :n="s.thumb < 0 ? 'sRd' : 'sR'" :w="8" :h="11" /></div>
              <span class="val"><span v-fit="s.vw">{{ s.v }}</span></span>
              <span v-if="s.thumb < 0" v-fit="22" class="mm">mm</span>
            </div>
          </div>
          <div class="right">
            <div v-for="c in checks" :key="c.t" class="ck" :class="{ dis: c.dis }"><i><Ic v-if="c.on" n="tick" :w="14" :h="14" /></i><span v-fit="c.w">{{ c.t }}</span></div>
            <div class="rep"><span v-fit="47">Repeat:</span><i>1</i></div>
          </div>
        </div>
      </div>
      <div class="pbtn"><span class="ok"><span v-fit="18">OK</span></span><span><span v-fit="43">Cancel</span></span></div>
    </section>
  </div>
</template>

<style>
html, body { margin: 0; background: #535353; overflow: hidden; }
</style>

<style scoped>
.app { position: relative; width: 2560px; height: 1440px; overflow: hidden; display: flex; flex-direction: column; background: #535353; font: 12.5px/16px "Open Sans", "Noto Sans", sans-serif; color: #f0f0f0; }
.app * { box-sizing: border-box; }
.app span, .app b, .app label { white-space: pre; }
i, em { font-style: normal; display: block; }
.ic { display: block; flex: none; overflow: visible; }
hr { border: 0; border-top: 2px solid #4b4b4b; margin: 0; height: 0; }
.lt { color: #c8c8c8; }

.title { height: 39px; border-bottom: 1px solid #404040; display: flex; align-items: center; padding: 0 4px 2px 11px; font-size: 14.5px; flex: none; }
.ai { width: 42px; font: 400 25px/30px "Open Sans"; color: #bd8a66; -webkit-text-stroke: .6px #bd8a66; letter-spacing: -1px; position: relative; top: -1px; }
.home { margin-right: 16px; }
.vd { width: 2px; height: 25px; background: #5f5f5f; flex: none; }
.menus { display: flex; padding-left: 18px; width: 497px; }
.menus > span { flex: none; }
.lay { margin: 0 9px 0 13px; }
.tright { margin-left: auto; display: flex; align-items: center; }
.tright .vd { margin: 0 14px 0 20px; }
.david { width: 50px; }
.dchev { margin-top: 4px; }
.tright .dchev + .vd { margin: 0 10px 0 16px; }
.stock { width: 213px; height: 27px; border: 1px solid #666; border-radius: 3px; background: #454545; display: flex; align-items: center; padding-left: 5px; gap: 6px; color: #8e8e8e; font-size: 14px; }
.wbtns { margin: 0 0 0 10px; width: 105px; height: 24px; border: 1px solid #6a6a6a; border-top: 0; border-radius: 0 0 4px 4px; display: flex; align-self: flex-start; }
.wbtns span { flex: 1; display: flex; justify-content: center; align-items: center; }
.wbtns span + span { border-left: 1px solid #6a6a6a; }

.ctl { height: 43px; border-bottom: 2px solid #393939; display: grid; flex: none; align-items: center; justify-items: start; padding: 2px 0 0 5px; grid-template-columns: 14px 92px 7px 55px 64px 46px 108px 143px 141px 53px 94px 38px 55px 8px 122px 102px 27px 1255px 34px 27px 34px 30px; }
.grip { width: 3px; height: 25px; background: repeating-linear-gradient(#3a3a3a 0 2px, transparent 2px 4px); }
.vdiv { width: 1px; height: 32px; background: #484848; }
.upone { margin-bottom: 3px; }
.sw { display: flex; width: 47px; height: 26px; border: 1px solid #656565; border-radius: 3px; align-items: center; overflow: hidden; background: #474747; }
.sw > .ic, .sw > i { width: 24px; height: 24px; }
.sw .blk { background: #000; border: 1px solid #ddd; }
.sw .wht { background: #e1e1e1; }
.dd { width: 22px; display: flex; align-items: center; justify-content: center; height: 100%; background: #4b4b4b; border-left: 1px solid #5e5e5e; flex: none; padding-right: 2px; }
.sw .dd { width: 21px; }
.lab { color: #ececec; padding-bottom: 1px; }
.dot { border-bottom: 2px dotted #b5b5b5; }
.cb { display: flex; height: 26px; border: 1px solid #616161; border-radius: 3px; background: #454545; overflow: hidden; }
.cb .sp { width: 22px; background: #4b4b4b; border-right: 1px solid #5e5e5e; display: flex; align-items: center; justify-content: center; flex: none; }
.cb .fl { flex: 1; padding-left: 4px; display: flex; align-items: center; min-width: 0; }
.c102 { width: 102px; }
.c86 { width: 86px; }
.c110 { width: 110px; }
.gr { display: flex; }
.gr i { width: 113px; height: 27px; background: #808080; border: 1px solid #8e8e8e; }
.gr span { width: 23px; background: #575757; display: flex; align-items: center; justify-content: center; }
.brush { display: flex; width: 133px; height: 26px; border: 1px solid #656565; border-radius: 3px; overflow: hidden; color: #000; }
.bl { flex: 1; background: #e1e1e1; display: flex; align-items: center; }
.bl i { width: 7px; height: 7px; border-radius: 50%; background: #000; margin: 0 14px 0 9px; }
.btn { height: 25px; border: 1px solid #7a7a7a; border-radius: 4px; display: flex; align-items: center; justify-content: center; color: #fff; padding-top: 1px; }
.b1 { width: 117px; }
.b2 { width: 89px; }

.main { height: 1308px; display: flex; flex: none; }
.phead { height: 15px; background: #424242; border-bottom: 1px solid #2f2f2f; display: flex; align-items: center; padding: 0 8px; }
.phead.r { justify-content: flex-end; }
.hgrip { width: 24px; height: 5px; background: repeating-linear-gradient(90deg, #3a3a3a 0 1px, transparent 1px 3px); }
.tools { width: 92px; border-right: 3px solid #404040; border-left: 1px solid #444; display: flex; flex-direction: column; flex: none; }
.tools > .hgrip { margin: 4px 0 16px 32px; }
.tgrid { display: grid; grid-template-columns: 37px 37px; grid-auto-rows: 29.9px; margin-left: 7px; height: 421px; border-bottom: 2px solid #4b4b4b; width: 75px; }
.tool { position: relative; }
.tool.sel { background: #2f2f2f; border-radius: 3px; width: 35px; height: 28px; }
.fly { position: absolute; left: 30px; top: 22px; border-left: 4px solid transparent; border-bottom: 4px solid #b8b8b8; }
.fs { position: relative; height: 76px; margin-left: 7px; margin-top: 1px; }
.fill { position: absolute; left: 0; top: 6px; width: 45px; height: 45px; background: #000; border: 2px solid #fff; outline: 1px solid #333; outline-offset: -1px; z-index: 1; }
.stk { position: absolute; left: 22px; top: 29px; }
.swp { position: absolute; left: 54px; top: 6px; }
.def { position: absolute; left: 0; top: 58px; }
.tri { display: flex; width: 73px; margin-left: 7px; border: 1px solid #606060; border-radius: 3px; }
.tri span { flex: 1; display: flex; align-items: center; justify-content: center; padding-right: 2px; }
.tri span + span { border-left: 1px solid #606060; padding-right: 0; }
.tri .on { background: #303030; }
.t26 { height: 26px; margin-top: 6px; }
.t23 { height: 24px; margin-top: 4px; }
.scr { margin: 11px 0 0 29px; }
.tdots { margin: 26px 0 0 35px; }
.tend { height: 1px; background: #333; margin-top: 14px; }

.center { width: 2089px; display: flex; flex-direction: column; flex: none; }
.tabbar { height: 36px; background: #424242; }
.dtab { width: 319px; height: 35px; background: #535353; border-right: 1px solid #333; padding: 0 8px 0 12px; display: flex; align-items: center; justify-content: space-between; font-size: 13px; }
.work { height: 1251px; display: flex; }
.canvas { width: 2066px; background: #606060; position: relative; overflow: hidden; }
.artboard { position: absolute; left: 247px; top: 132px; right: 0; bottom: 0; background: #fff; border-left: 1px solid #000; border-top: 1px solid #000; }
.logo { position: absolute; left: 248px; top: 122px; }
.vsc { width: 23px; background: #4b4b4b; border-right: 2px solid #3d3d3d; display: flex; flex-direction: column; align-items: center; justify-content: space-between; padding: 594px 0 7px; }
.vsc i { width: 18px; height: 32px; border-radius: 7px; background: #6e6e6e; }
.status { height: 21px; background: #4f4f4f; display: grid; align-items: center; overflow: hidden; grid-template-columns: 99px 20px 19px 86px 18px 22px 250px 22px 1fr; padding-left: 4px; border-bottom: 1px solid #3a3a3a; }
.sbox { height: 20px; display: flex; background: #454545; border: 1px solid #616161; border-radius: 3px 3px 0 0; padding: 5px 0 0 4px; line-height: 16px; }
.sbox em { width: 22px; margin: -5px 0 0 auto; background: #4b4b4b; border-left: 1px solid #5e5e5e; display: flex; align-items: center; justify-content: center; padding: 4px 3px 0 0; }
.z { width: 86px; }
.p { width: 75px; }
.selbox { border-left: 1px solid #444; border-right: 1px solid #444; height: 20px; width: 250px; display: flex; justify-content: center; padding: 5px 0 0; color: #c4c4c4; }
.playb { display: flex; justify-content: center; padding-top: 2px; }
.hsc { border-left: 1px solid #3d3d3d; background: #4a4a4a; height: 20px; display: flex; align-items: center; padding: 0 30px 0 7px; }
.hsc i { width: 32px; height: 18px; border-radius: 7px; background: #6e6e6e; margin-left: 714px; }
.hsc .hr { margin-left: auto; }

.strip { width: 49px; border-right: 2px solid #3a3a3a; flex: none; border-left: 1px solid #3a3a3a; }
.sg { display: flex; flex-direction: column; align-items: center; border-bottom: 2px solid #3a3a3a; }
.sg .hgrip { margin-top: 4px; }
.g1.sg { height: 121px; }
.g2.sg { height: 87px; }
.abtn { margin-top: 6px; width: 35px; height: 29px; background: #363636; border: 1px solid #484848; border-radius: 3px; display: flex; align-items: center; justify-content: center; gap: 2px; color: #c8c8c8; }
.abtn b { font: 700 22px/22px "Open Sans"; }
.abtn i { width: 1px; height: 22px; background: #c8c8c8; }
.s2 { margin-top: 12px; } .s3 { margin-top: 15px; } .s4 { margin-top: 10px; } .s5 { margin-top: 13px; }

.panels { flex: 1; display: flex; flex-direction: column; }
.pn { border-right: 2px solid #3a3a3a; border-bottom: 3px solid #353535; border-left: 1px solid #3a3a3a; flex: none; font-size: 12.5px; }
.tabs { height: 35px; background: #424242; display: flex; align-items: center; position: relative; font-size: 12px; border-bottom: 1px solid #3a3a3a; padding-top: 1px; }
.tab { height: 35px; display: flex; align-items: center; border-right: 1px solid #393939; overflow: hidden; color: #a3a3a3; flex: none; padding: 1px 0 0 11px; }
.tab b { font-weight: 600; -webkit-text-stroke: .2px; }
.tab.on { background: #535353; color: #fff; }
.tab .ic { margin-right: 7px; }
.pm { margin-left: auto; margin-right: 6px; }
.color { height: 454px; }
.t1 { width: 63px; padding-left: 6px; } .t2 { width: 83px; } .t3 { width: 69px; } .t4 { width: 63px; }
.cbody { display: flex; height: 138px; padding: 9px 0 0 7px; }
.cleft { width: 58px; }
.cl1 { display: flex; gap: 9px; margin-top: -1px; }
.cfs { position: relative; margin-top: 6px; height: 37px; }
.cfs i { position: absolute; width: 25px; height: 25px; background: #000; border: 2px solid #fff; outline: 1px solid #333; outline-offset: -1px; z-index: 1; }
.cfs .ic { position: absolute; left: 12px; top: 13px; }
.slr { display: flex; height: 41px; }
.slr > .lt { width: 19px; padding: 7px 0 0 1px; }
.trk { width: 141px; padding: 10px 0 0 5px; }
.trk i { width: 127px; height: 6px; border: 1px solid #555; }
.trk .ic { margin-left: -6px; }
.fbox { width: 45px; height: 26px; background: #454545; border: 1px solid #5e5e5e; border-radius: 3px; display: flex; align-items: center; padding-left: 6px; }
.hexrow { display: flex; align-items: center; padding-left: 7px; height: 26px; }
.trisw { display: flex; border: 1px solid #333; margin-right: 163px; margin-top: -1px; }
.trisw .k { width: 16px; height: 16px; background: #000; } .trisw .w { width: 16px; height: 16px; background: #fff; }
.hexrow > .lt { width: 13px; }
.hx { width: 75px; }
.spec { margin: 7px 0 0 7px; width: 300px; height: 237px; border: 2px solid #3c3c3c; border-width: 1px 2px 1px 2px; background: linear-gradient(to bottom, #fff, rgba(255, 255, 255, 0) 50%), linear-gradient(to bottom, rgba(0, 0, 0, 0) 50%, #000), linear-gradient(90deg, #f00, #ff0, #0f0, #0ff, #00f, #f0f, #f00); }
.path { height: 175px; }
.p1 { width: 86px; padding-left: 12px; } .p2 { width: 54px; } .p3 { width: 84px; padding-left: 12px; }
.path p { margin: 10px 0 0 6px; height: 16px; }
.pf { display: flex; align-items: center; height: 24px; }
.pf.a { padding-left: 14px; gap: 28px; margin-top: 11px; }
.pf.b { padding-left: 17px; gap: 29px; margin-top: 12px; }
.path .a + p { margin-top: 13px; }
.exp { width: 89px; height: 25px; background: #595959; border-radius: 2px; color: #777; display: flex; align-items: center; justify-content: center; margin-left: -6px; }
.stroke { height: 436px; color: #7f7f7f; }
.s1 { width: 71px; padding-left: 6px; }
.srow { display: flex; align-items: center; height: 28px; }
.srow label { width: 77px; margin-right: 4px; display: flex; justify-content: flex-end; }
.r1 { height: 26px; margin-top: 7px; }
.stroke .r2 { margin-top: 6px; }
.tb { display: flex; width: 86px; height: 28px; border: 1px solid #646464; border-radius: 4px; }
.tb.pair { width: 57px; }
.tb span, .tb2 > span { flex: 1; display: flex; align-items: center; justify-content: center; }
.tb span + span, .tb2 > span + span { border-left: 1px solid #646464; }
.lim { margin-left: 61px; width: 34px; }
.df { width: 43px; height: 27px; background: #595959; border-radius: 2px; }
.df.l { width: 49px; }
.xx { margin-left: 4px; }
.stroke hr { margin: 6px 6px 0; }
.dl { display: flex; align-items: center; margin: 5px 0 0 7px; height: 28px; }
.wh { color: #fff; margin-left: 6px; width: 196px; }
.tb2 { display: flex; width: 97px; height: 28px; border: 1px solid #646464; border-radius: 4px; }
.dashes { display: flex; margin: 6px 0 0 10px; gap: 9.700px; }
.dashes span { display: flex; flex-direction: column; align-items: center; }
.dashes em { margin-top: 3px; margin-left: -2px; }
.stroke .h2 { margin-top: 7px; }
.r3 { height: 27px; margin-top: 8px; } .r4 { height: 27px; margin-top: 10px; } .r5 { margin-top: 9px; } .r6 { height: 27px; margin-top: 7px; }
.ah { display: flex; height: 27px; width: 71px; background: #595959; margin-right: 8px; }
.ah i { width: 48px; background: #808080; border: 1px solid #8a8a8a; }
.ah span { flex: 1; display: flex; align-items: center; justify-content: center; }
.ah.wide { width: 134px; } .ah.wide i { width: 110px; }
.sc { display: flex; height: 27px; width: 71px; background: #595959; margin-right: 8px; border-radius: 2px; }
.sc > span { width: 24px; border-right: 1px solid #505050; display: flex; align-items: center; justify-content: center; }
.sc em { padding: 6px 0 0 4px; }
.ri { margin-left: auto; margin-right: 12px; }
.fh { margin-left: 45px; } .fv { margin-left: 14px; }
.layers { flex: 1; border-bottom: 0; }
.y1 { width: 55px; padding-left: 12px; } .y2 { width: 58px; } .y3 { width: 54px; } .y4 { width: 53px; padding-left: 10px; } .y5 { width: 58px; padding-left: 11px; }
.lline { height: 2px; background: #3a3a3a; margin-top: 2px; }

.task { height: 50px; background: #4a4a4a; display: flex; align-items: center; flex: none; padding-left: 20px; }
.start { margin-right: 20px; }
.search { width: 430px; height: 49px; background: #f1f1f1; border: 1px solid #bdbdbd; color: #3a3a3a; display: flex; align-items: center; font-size: 18px; padding-left: 14px; gap: 14px; }
.tv { margin: 0 40px 0 20px; }
.fo { margin-right: 24px; }
.u { height: 50px; display: flex; align-items: center; justify-content: center; border-bottom: 3px solid #76b9ed; padding-top: 2px; }
.app1 { width: 51px; } .app2 { width: 61px; margin-left: 6px; background: #6f6f6f; padding-top: 0; } .app3 { width: 51px; margin-left: 6px; padding-top: 0; }
.app2 b { width: 29px; height: 29px; background: #2a1200; border: 2px solid #f7861d; color: #f7861d; font: 600 15px/24px "Open Sans"; text-align: center; }
.tray { margin-left: auto; display: grid; align-items: center; grid-template-columns: 28px 30px 29px 29px 34px 50px 86px 52px; }
.two { display: flex; flex-direction: column; line-height: 22px; font-size: 14px; gap: 1px; color: #fff; align-items: center; width: 29px; }
.clk { width: 60px; margin-left: -1px; }

.chr { position: absolute; left: 1890px; top: 93px; width: 290px; height: 334px; background: #535353; border: 1px solid #2e2e2e; border-top: 5px solid #353535; padding-left: 7px; box-shadow: -2px 2px 6px rgba(0, 0, 0, .25); color: #fff; }
.chr .tabs { margin-left: -7px; }
.c1 { width: 87px; padding-left: 6px; } .c2 { width: 60px; } .c3 { width: 60px; }
.mo { margin-left: 30px; }
.bar { width: 1px; height: 14px; background: #a0a0a0; margin-left: 9px; }
.chr .pm { margin-left: 9px; }
.full { width: 274px; }
.f1 { margin-top: 7px; } .f2 { margin-top: 7px; }
.f1 .fl { padding-left: 3px; gap: 8px; } .f2 .fl { padding-left: 8px; }
.k1 { margin: 7px 8px 7px 0; } .k2 { margin: 6px 8px 7px 0; } .k3 { margin: 6px 8px 0 0; } .k4 { margin: 0 8px 7px 0; }
.cgrid { display: grid; grid-template-columns: 26px 120px 26px 102px; row-gap: 7px; align-items: center; }
.ts { display: grid; grid-template-columns: 38px 68px 36px 70px 37px 20px; height: 30px; align-items: center; padding: 2px 0 0 5px; font: 400 19px/20px "Liberation Serif", serif; color: #c0c0c0; }
.ts span { -webkit-text-stroke: .5px; justify-self: start; }
.ts small { font-size: 14px; }
.ts sup, .ts sub { font-size: 10px; line-height: 0; }
.un { border-bottom: 1px solid #c0c0c0; height: 18px; line-height: 18px; }
.st { text-decoration: line-through; }
.lang { display: flex; align-items: center; }
.nd { width: 106px; } .nd .dd { border: 0; } .nd, .nd .dd { background: #484848; } .nd .fl { padding-left: 8px; }
.aa { display: flex; width: 63px; padding: 4px 0 0 37px; font: 700 14px/16px "Noto Sans"; color: #b8b8b8; }
.aa i:first-child { margin-top: -6px; }

.d1 { position: absolute; left: 871px; top: 217px; width: 841px; height: 847px; background: #535353; box-shadow: 0 3px 12px rgba(0, 0, 0, .45), 0 0 0 1px rgba(90, 90, 90, .5); display: flex; flex-direction: column; }
.dt { height: 37px; background: #fff; color: #999; font-size: 15px; padding: 10px; flex: none; }
.d1b { flex: 1; display: flex; flex-direction: column; }
.presets { display: flex; align-items: center; margin: 27px 0 0 600px; gap: 14px; }
.presets > i { width: 156px; height: 26px; background: #4a4a4a; border: 1px solid #616161; border-radius: 3px; display: flex; align-items: center; justify-content: flex-end; padding-right: 6px; }
.pr2 { margin: 13px 0 0 600px; width: 156px; height: 26px; background: #4a4a4a; border: 1px solid #616161; border-radius: 3px; }
.pvbox { margin: 400px 0 0 19px; width: 200px; height: 220px; border: 1px solid #494949; border-radius: 3px; flex: none; }
.pv { height: 139px; background: #878787; padding-left: 12px; }
.pv i { height: 130px; background: #fff; border-left: 1px solid #000; }
.pnav { display: flex; gap: 16px; padding: 15px 0 0 10px; }
.doc { padding: 14px 0 0 31px; color: #c0c0c0; }
.d1f { display: flex; margin: 28px 0 0 19px; }
.blue { width: 111px; height: 33px; border-radius: 17px; background: #46a0f5; color: #fff; font-size: 15px; line-height: 33px; padding-left: 31px; flex: none; }
.d1f i { width: 105px; height: 33px; border: 2px solid #c8c8c8; border-radius: 17px; margin-left: 28px; flex: none; }
.d1f .blue + i { margin-left: 328px; } .d1f i:last-child { margin-left: 16px; }

.d2 { position: absolute; left: 890px; top: 236px; width: 610px; height: 516px; background: #f0f0f0; border: 1px solid #9a9a9a; box-shadow: 0 3px 14px rgba(0, 0, 0, .45); color: #000; font: 14px/16px "Liberation Sans", Arial, sans-serif; }
.wt { height: 37px; background: #fff; display: flex; align-items: center; padding: 0 14px 1px 9px; gap: 5px; font: 15px/20px "Open Sans", sans-serif; color: #999; }
.wt .x { margin-left: auto; }
.wt .bk { color: #000; }
.gtab { position: relative; z-index: 1; margin: 8px 0 0 8px; width: 64px; height: 25px; background: #fff; border: 1px solid #dcdcdc; border-bottom: 0; padding: 3px 0 0 7px; }
.gpage { margin: -1px 0 0 8px; width: 590px; height: 400px; background: #fff; border: 1px solid #dcdcdc; padding: 14px 17px 0; }
fieldset { border: 1px solid #dcdcdc; margin: 0; padding: 0 0 0 5px; }
legend { padding: 0 4px; line-height: 16px; }
.fa { height: 206px; } .fb { height: 144px; margin-top: 16px; }

.d3 { position: absolute; left: 931px; top: 327px; width: 836px; height: 696px; background: #f0f0f0; border: 1px solid #6b6b6b; box-shadow: 0 5px 16px rgba(0, 0, 0, .42); color: #000; font: 14px/16px "Liberation Sans", Arial, sans-serif; }
.ptabs { display: flex; margin: 8px 0 0 9px; height: 24px; align-items: flex-end; position: relative; z-index: 1; }
.ptabs > span { height: 22px; border: 1px solid #d9d9d9; border-left-width: 0; padding: 3px 0 0 6px; background: #f0f0f0; margin-bottom: 1px; }
.ptabs > .on { height: 25px; background: #fff; border-bottom: 0; border-left-width: 1px; padding: 3px 0 0 7px; margin-bottom: 0; }
.q1 { width: 57px; } .ptabs > .q1 { border-left-width: 1px; } .q2 { width: 52px; } .q3 { width: 72px; } .q4 { width: 49px; } .q5 { width: 73px; } .q6 { width: 50px; }
.ptabs > .q3 { padding-left: 4px; }
.ppage { margin: -1px 0 0 8px; width: 816px; height: 581px; background: #fff; border: 1px solid #dcdcdc; }
.hd { display: flex; margin: 13px 0 0 21px; height: 17px; }
.hd > span { flex: none; }
.lst { margin: 5px 0 0 17px; width: 738px; height: 239px; border: 1px solid #828790; display: flex; padding: 1px; overflow: hidden; background: #fff; }
.rows { width: 714px; height: 235px; overflow: hidden; }
.row { display: flex; height: 20px; line-height: 16px; }
.row span { text-align: center; flex: none; letter-spacing: -.5px; }
.row span:nth-child(1) { width: 27px; }
.row span:nth-child(2) { width: 70px; padding: 1px 0 0 43px; }
.row span:nth-child(3) { width: 86px; }
.row span:nth-child(4) { width: 72px; }
.row span:nth-child(5) { width: 56px; margin-left: -1px; margin-right: 8px; }
.row span:nth-child(6) { width: 60px; }
.row span:nth-child(7) { width: 60px; margin-left: 10px; }
.row span:nth-child(8) { width: 49px; margin-left: -5px; }
.row span:nth-child(9) { width: 49px; }
.row span:nth-child(10) { width: 49px; margin-left: -5px; }
.row span:nth-child(11) { width: 49px; margin-left: 29px; }
.row span:nth-child(12) { width: 40px; margin-left: -2px; }
.row i { width: 28px; height: 18px; border: 1px solid #000; }
.row.sel { background: #000080; color: #fff; outline: 1px solid #ffff80; outline-offset: -1px; }
.row.sel i { border-color: #fff; }
.lsb { width: 20px; background: #f0f0f0; display: flex; flex-direction: column; align-items: center; padding-top: 6px; }
.lsb i { width: 20px; height: 132px; background: #cdcdcd; margin-top: 6px; }
.lsb .dn { margin-top: 66px; }
.form { display: flex; margin-left: 17px; }
.left { width: 540px; padding-top: 6px; }
.sl { display: flex; height: 21px; margin-bottom: 9px; align-items: center; }
.sl.n2 { margin-bottom: 11px; } .sl.n3 { margin-bottom: 11px; }
.sl label { width: 68px; } .sl label.ind { padding-left: 12px; }
.n0 label { margin-top: -3px; } .n1 label { margin-top: 2px; } .n2 label { margin-top: 5px; } .n3 label { margin-top: 1px; } .n4 label { margin-top: -2px; }
.track { position: relative; width: 326px; height: 21px; background: #f0f0f0; display: flex; align-items: center; justify-content: space-between; padding: 0 6px 1px 5px; }
.track i { position: absolute; top: 0; width: 21px; height: 20px; background: #cdcdcd; }
.val { margin-left: 14px; }
.n0 .val { margin-top: -3px; } .n1 .val { margin-top: 1px; }
.dis .val { width: 49px; height: 28px; border: 1px solid #ccc; color: #838383; padding: 1px 3px; margin-top: -3px; }
.n4 .val { width: 51px; }
.mm { margin-left: 11px; width: 24px; margin-top: -3px; }
.n4 .mm { margin-left: 9px; margin-top: -4px; }
.right { padding-top: 7px; }
.ck { display: flex; height: 16px; margin-bottom: 8px; align-items: center; gap: 3px; }
.ck i { width: 16px; height: 16px; border: 1px solid #333; }
.ck.dis { color: #838383; } .ck.dis i { border-color: #ccc; }
.rep { display: flex; margin-top: 2px; align-items: center; gap: 13px; padding-top: 2px; }
.rep i { width: 46px; height: 28px; border: 1px solid #6a6a6a; padding: 2px 3px; }
.rep > span { width: 47px; }
.pbtn { display: flex; justify-content: flex-end; gap: 10px; margin: 10px 9px 0 0; }
.pbtn > span { width: 98px; height: 26px; background: #e1e1e1; border: 1px solid #adadad; display: flex; align-items: center; justify-content: center; }
.pbtn > .ok { border: 2px solid #0078d7; }
</style>
